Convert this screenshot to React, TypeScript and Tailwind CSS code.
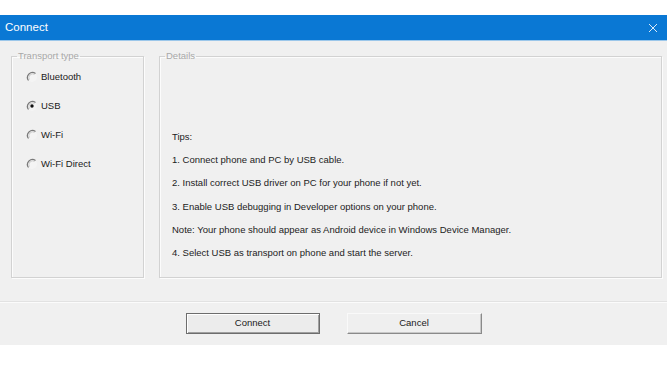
import type { ReactNode } from 'react';

const TRANSPORTS = [
  { id: 'bt', label: 'Bluetooth', checked: false },
  { id: 'usb', label: 'USB', checked: true },
  { id: 'wifi', label: 'Wi-Fi', checked: false },
  { id: 'wfd', label: 'Wi-Fi Direct', checked: false },
];

const TIPS = [
  '1. Connect phone and PC by USB cable.',
  '2. Install correct USB driver on PC for your phone if not yet.',
  '3. Enable USB debugging in Developer options on your phone.',
  'Note: Your phone should appear as Android device in Windows Device Manager.',
  '4. Select USB as transport on phone and start the server.',
];

const Radio = ({ checked }: { checked: boolean }) => (
  <svg width="12" height="12" viewBox="0 0 12 12" className="shrink-0">
    <circle cx="6" cy="6" r="5" fill="#f4f4f4" />
    <path d="M2.5 9.5 A5 5 0 0 1 9.5 2.5" fill="none" stroke="#7a7a7a" strokeWidth="1.2" />
    <path d="M3.4 8.6 A3.8 3.8 0 0 1 8.6 3.4" fill="none" stroke="#c4c4c4" strokeWidth="0.8" />
    {checked && <circle cx="6" cy="6" r="1.7" fill="#111" />}
  </svg>
);

const GroupBox = ({ title, className, children }: { title: string; className: string; children?: ReactNode }) => (
  <fieldset className={`border border-[#d2d2d2] shadow-[inset_1px_1px_0_#fcfcfc,1px_1px_0_#fcfcfc] ${className}`}>
    <legend className="ml-[5px] px-[1px] text-[9.5px] leading-[12px] text-[#a8a8a8]">{title}</legend>
    {children}
  </fieldset>
);

const App = () => {
  return (
    <div
      className="w-[667px] h-[375px] bg-white pt-[15px] overflow-hidden"
      style={{ fontFamily: '"Liberation Sans", Arial, sans-serif' }}
    >
      <div className="h-[26px] bg-[#0a78d4] flex items-center justify-between pl-[5px] pr-[9px] border-b border-[#9cc7ea]">
        <span className="text-white text-[11.5px]">Connect</span>
        <svg width="10" height="10" viewBox="0 0 10 10">
          <path d="M1 1 L9 9 M9 1 L1 9" stroke="#dbeaf7" strokeWidth="1" />
        </svg>
      </div>

      <div className="h-[304px] bg-[#f0f0f0] flex flex-col">
        <div className="flex pt-[9px] pl-[11px] gap-[15px]">
          <GroupBox title="Transport type" className="w-[133px] h-[228px]">
            <div className="flex flex-col gap-[17px] pl-[14px] pt-[9px]">
              {TRANSPORTS.map((t) => (
                <div key={t.id} className="flex items-center gap-[3px] h-[12px]">
                  <Radio checked={t.checked} />
                  <span className="text-[9.5px] text-[#1a1a1a]">{t.label}</span>
                </div>
              ))}
            </div>
          </GroupBox>

          <GroupBox title="Details" className="w-[503px] h-[228px]">
            <div className="flex flex-col pl-[12px] pt-[69px] text-[9.5px] text-[#1c1c1c] leading-[12px] gap-[11.2px]">
              <span>Tips:</span>
              {TIPS.map((tip) => (
                <span key={tip}>{tip}</span>
              ))}
            </div>
          </GroupBox>
        </div>

        <div className="mt-[23px] border-t border-[#e2e2e2] shadow-[0_1px_0_#fbfbfb]" />

        <div className="flex justify-center gap-[27px] mt-[11px]">
          <button className="w-[134px] h-[21px] bg-[#ececec] border border-[#6d6d6d] shadow-[inset_1px_1px_0_#fff,inset_-1px_-1px_0_#a0a0a0] text-[9.5px] text-[#1a1a1a]">
            Connect
          </button>
          <button className="w-[135px] h-[21px] bg-[#efefef] border border-[#f9f9f9] border-r-[#8a8a8a] border-b-[#8a8a8a] shadow-[inset_-1px_-1px_0_#c8c8c8] text-[9.5px] text-[#1a1a1a]">
            Cancel
          </button>
        </div>
      </div>
    </div>
  );
};

export default App;
